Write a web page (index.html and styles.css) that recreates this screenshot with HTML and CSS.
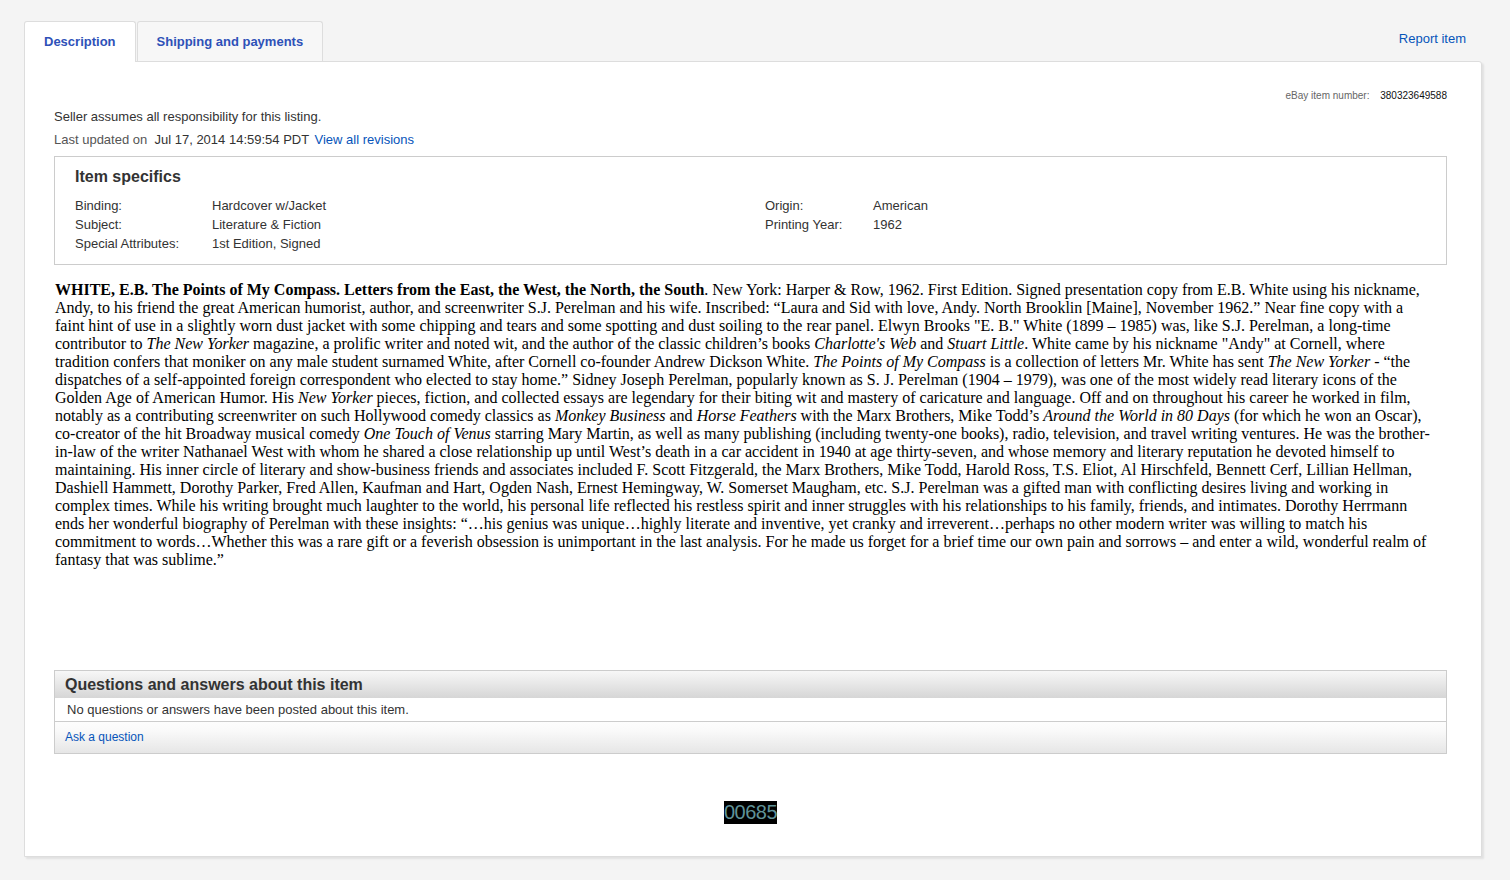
FILE: index.html
```html
<!DOCTYPE html>
<html lang="en">
  <head>
    <meta charset="UTF-8" />
    <meta name="viewport" content="width=device-width, initial-scale=1.0" />
    <title>Item description</title>
    <link rel="stylesheet" href="styles.css">
  </head>
  <body>
    <div class="page">
      <div class="tabbar">
        <ul class="tabs">
          <li class="tab active"><a href="#">Description</a></li>
          <li class="tab"><a href="#">Shipping and payments</a></li>
        </ul>
        <a class="report" href="#">Report item</a>
      </div>

      <div class="panel">
        <div class="itemnum">
          <span class="itemnum-label">eBay item number:</span>
          <span class="itemnum-value">380323649588</span>
        </div>
        <p class="seller">Seller assumes all responsibility for this listing.</p>
        <p class="updated">
          <span class="muted">Last updated on</span>&nbsp; Jul 17, 2014 14:59:54 PDT
          <a href="#">View all revisions</a>
        </p>

        <div class="specs">
          <h2>Item specifics</h2>
          <div class="specs-cols">
            <dl class="specs-group">
              <dt>Binding:</dt><dd>Hardcover w/Jacket</dd>
              <dt>Subject:</dt><dd>Literature &amp; Fiction</dd>
              <dt>Special Attributes:</dt><dd>1st Edition, Signed</dd>
            </dl>
            <dl class="specs-group right">
              <dt>Origin:</dt><dd>American</dd>
              <dt>Printing Year:</dt><dd>1962</dd>
            </dl>
          </div>
        </div>

        <div class="desc">
          <b>WHITE, E.B. The Points of My Compass. Letters from the East, the West, the North, the South</b>. New York: Harper &amp; Row, 1962. First Edition. Signed presentation copy from E.B. White using his nickname, Andy, to his friend the great American humorist, author, and screenwriter S.J. Perelman and his wife. Inscribed: “Laura and Sid with love, Andy. North Brooklin [Maine], November 1962.” Near fine copy with a faint hint of use in a slightly worn dust jacket with some chipping and tears and some spotting and dust soiling to the rear panel. Elwyn Brooks "E. B." White (1899 – 1985) was, like S.J. Perelman, a long-time contributor to <i>The New Yorker</i> magazine, a prolific writer and noted wit, and the author of the classic children’s books <i>Charlotte's Web</i> and <i>Stuart Little</i>. White came by his nickname "Andy" at Cornell, where tradition confers that moniker on any male student surnamed White, after Cornell co-founder Andrew Dickson White. <i>The Points of My Compass</i> is a collection of letters Mr. White has sent <i>The New Yorker</i> - “the dispatches of a self-appointed foreign correspondent who elected to stay home.” Sidney Joseph Perelman, popularly known as S. J. Perelman (1904 – 1979), was one of the most widely read literary icons of the Golden Age of American Humor. His <i>New Yorker</i> pieces, fiction, and collected essays are legendary for their biting wit and mastery of caricature and language. Off and on throughout his career he worked in film, notably as a contributing screenwriter on such Hollywood comedy classics as <i>Monkey Business</i> and <i>Horse Feathers</i> with the Marx Brothers, Mike Todd’s <i>Around the World in 80 Days</i> (for which he won an Oscar), co-creator of the hit Broadway musical comedy <i>One Touch of Venus</i> starring Mary Martin, as well as many publishing (including twenty-one books), radio, television, and travel writing ventures. He was the brother-in-law of the writer Nathanael West with whom he shared a close relationship up until West’s death in a car accident in 1940 at age thirty-seven, and whose memory and literary reputation he devoted himself to maintaining. His inner circle of literary and show-business friends and associates included F. Scott Fitzgerald, the Marx Brothers, Mike Todd, Harold Ross, T.S. Eliot, Al Hirschfeld, Bennett Cerf, Lillian Hellman, Dashiell Hammett, Dorothy Parker, Fred Allen, Kaufman and Hart, Ogden Nash, Ernest Hemingway, W. Somerset Maugham, etc. S.J. Perelman was a gifted man with conflicting desires living and working in complex times. While his writing brought much laughter to the world, his personal life reflected his restless spirit and inner struggles with his relationships to his family, friends, and intimates. Dorothy Herrmann ends her wonderful biography of Perelman with these insights: “…his genius was unique…highly literate and inventive, yet cranky and irreverent…perhaps no other modern writer was willing to match his commitment to words…Whether this was a rare gift or a feverish obsession is unimportant in the last analysis. For he made us forget for a brief time our own pain and sorrows – and enter a wild, wonderful realm of fantasy that was sublime.”
        </div>

        <div class="qa">
          <div class="qa-head">Questions and answers about this item</div>
          <div class="qa-body">No questions or answers have been posted about this item.</div>
          <div class="qa-foot"><a href="#">Ask a question</a></div>
        </div>

        <div class="counter"><span>00685</span></div>
      </div>
    </div>
  </body>
</html>
```

FILE: styles.css
```css
body {
  margin: 0;
  padding: 21px 28px 18px 24px;
  background-color: #f4f4f4;
  font-family: "Liberation Sans", Arial, Helvetica, sans-serif;
  font-size: 13px;
  color: #333;
}
a {
  color: #0654ba;
  text-decoration: none;
}
p {
  margin: 0;
}
.tabbar {
  display: flex;
  justify-content: space-between;
  align-items: flex-start;
}
.tabs {
  list-style: none;
  margin: 0 0 -1px;
  padding: 0;
  display: flex;
  gap: 1px;
}
.tab {
  height: 39px;
  border: 1px solid #ddd;
  border-bottom: none;
  border-radius: 3px 3px 0 0;
  background-color: #f7f7f7;
}
.tab a {
  display: block;
  padding: 0 19px;
  line-height: 39px;
  font-weight: bold;
  color: #2e51b8;
}
.tab.active {
  height: 40px;
  background-color: #fff;
  position: relative;
}
.report {
  margin: 9px 16px 0 0;
  line-height: 17px;
}
.panel {
  background-color: #fff;
  border: 1px solid #ddd;
  border-radius: 0 3px 0 0;
  box-shadow: 2px 2px 2px rgba(0, 0, 0, 0.08);
  padding: 27px 34px 32px 29px;
}
.itemnum {
  text-align: right;
  font-size: 10px;
  line-height: 14px;
}
.itemnum-label {
  color: #666;
  margin-right: 8px;
}
.itemnum-value {
  color: #111;
}
.seller {
  margin-top: 5px;
  line-height: 17px;
}
.updated {
  margin-top: 6px;
  line-height: 17px;
}
.muted {
  color: #555;
}
.updated a {
  margin-left: 2px;
}
.specs {
  margin-top: 8px;
  border: 1px solid #ccc;
  padding: 10px 20px 11px;
}
.specs h2 {
  margin: 0 0 9px;
  font-size: 16px;
  line-height: 20px;
  color: #333;
}
.specs-cols {
  display: grid;
  grid-template-columns: 690px 1fr;
  align-items: start;
}
.specs-group {
  margin: 0;
  display: grid;
  grid-template-columns: 137px 1fr;
  align-content: start;
  line-height: 19px;
}
.specs-group.right {
  grid-template-columns: 108px 1fr;
}
.specs-group dd {
  margin: 0;
}
.desc {
  margin: 16px 0 101px;
  padding: 0 15px 0 1px;
  font-family: "Liberation Serif", "Times New Roman", serif;
  font-size: 16px;
  line-height: 18px;
  color: #000;
}
.qa {
  border: 1px solid #ccc;
}
.qa-head {
  height: 27px;
  line-height: 27px;
  padding-left: 10px;
  font-size: 16px;
  font-weight: bold;
  color: #333;
  background: linear-gradient(#f7f7f7, #d6d6d6);
}
.qa-body {
  height: 23px;
  line-height: 23px;
  padding-left: 12px;
  border-bottom: 1px solid #ccc;
}
.qa-foot {
  height: 31px;
  line-height: 31px;
  padding-left: 10px;
  font-size: 12px;
  background: linear-gradient(#fdfdfd, #f9f9f9 30%, #e6e6e6);
}
.counter {
  margin-top: 47px;
  text-align: center;
}
.counter span {
  display: inline-block;
  background-color: #000;
  color: #5f9298;
  font-size: 20px;
  line-height: 23px;
  letter-spacing: -0.5px;
}
```
